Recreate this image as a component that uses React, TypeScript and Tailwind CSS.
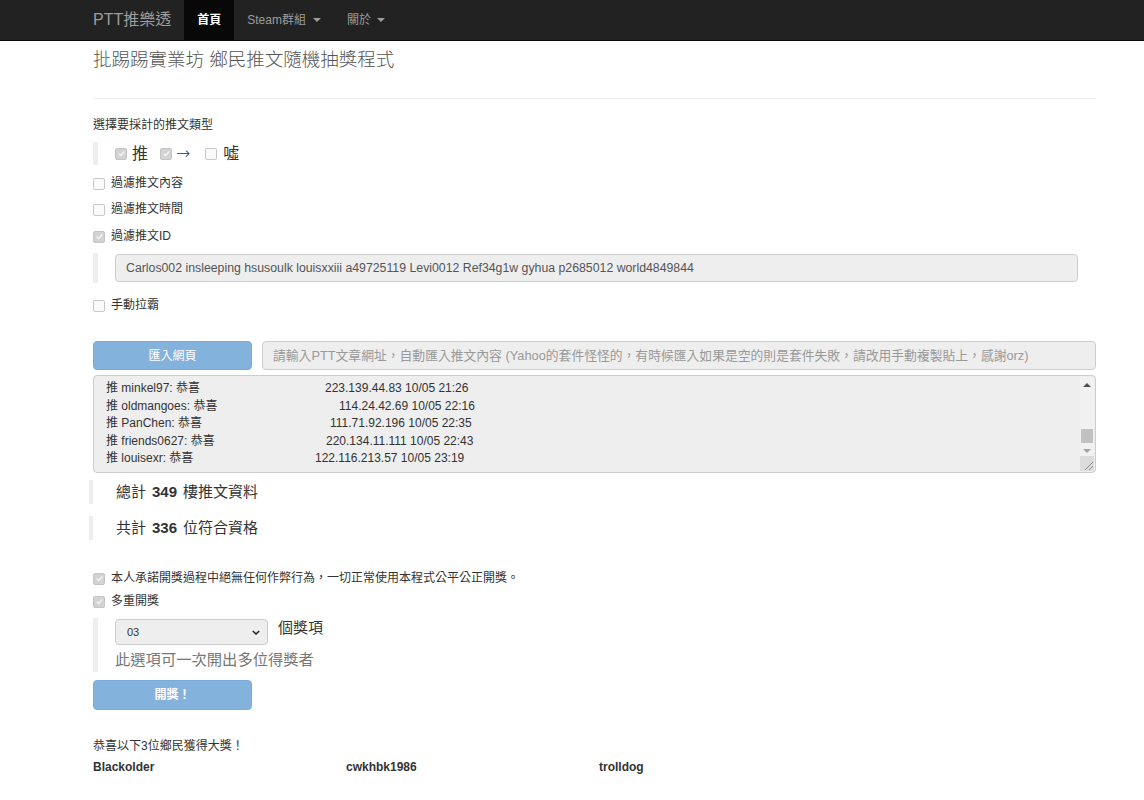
import { useState } from 'react';

const pushes = [
  { name: '推 minkel97: 恭喜', gap: 'w-[219px]', ip: '223.139.44.83 10/05 21:26' },
  { name: '推 oldmangoes: 恭喜', gap: 'w-[233px]', ip: '114.24.42.69 10/05 22:16' },
  { name: '推 PanChen: 恭喜', gap: 'w-[224px]', ip: '111.71.92.196 10/05 22:35' },
  { name: '推 friends0627: 恭喜', gap: 'w-[220px]', ip: '220.134.11.111 10/05 22:43' },
  { name: '推 louisexr: 恭喜', gap: 'w-[209px]', ip: '122.116.213.57 10/05 23:19' },
];

const winners = ['Blackolder', 'cwkhbk1986', 'trolldog'];

function Box({ checked, onClick }: { checked?: boolean; onClick?: () => void }) {
  return (
    <span
      onClick={onClick}
      className={
        checked
          ? 'flex h-[12px] w-[12px] shrink-0 items-center justify-center rounded-[2px] border border-[#c4c4c4] bg-[#d3d3d3]'
          : 'flex h-[12px] w-[12px] shrink-0 items-center justify-center rounded-[2px] border border-[#c8c8c8] bg-[#fafafa]'
      }
    >
      {checked && (
        <svg viewBox="0 0 10 10" className="h-[9px] w-[9px]">
          <path d="M2 5.2 L4.2 7.3 L8 2.8" fill="none" stroke="#f4f4f4" strokeWidth="1.6" />
        </svg>
      )}
    </span>
  );
}

function CheckRow({ label, checked, className }: { label: string; checked?: boolean; className: string }) {
  const [on, setOn] = useState(!!checked);
  return (
    <div className={`flex h-[17px] items-center gap-[6px] ${className}`}>
      <Box checked={on} onClick={() => setOn(!on)} />
      <span className="leading-[17px]">{label}</span>
    </div>
  );
}

function Caret() {
  return <span className="inline-block h-0 w-0 border-x-[4px] border-t-[4px] border-x-transparent border-t-[#9d9d9d]" />;
}

export default function App() {
  return (
    <div className="min-h-screen bg-white text-[12px] text-[#333] font-['Liberation_Sans','Noto_Sans_CJK_TC',sans-serif]">
      {/* Navbar */}
      <nav className="flex h-[41px] items-stretch border-b border-[#080808] bg-[#222] pl-[93px]">
        <div className="mr-[13px] text-[16px] leading-[40px] text-[#9d9d9d]">PTT推樂透</div>
        <div className="bg-[#080808] px-[13px] text-[12px] font-bold leading-[40px] text-white">首頁</div>
        <div className="flex items-center gap-[7px] px-[13px] text-[12px] text-[#9d9d9d]">
          Steam群組 <Caret />
        </div>
        <div className="flex items-center gap-[6px] px-[13px] text-[12px] text-[#9d9d9d]">
          關於 <Caret />
        </div>
      </nav>

      <main className="pl-[93px] pr-[48px]">
        <h1 className="mt-[8px] h-[22px] text-[18.5px] font-light leading-[22px] text-[#555]">
          批踢踢實業坊 鄉民推文隨機抽獎程式
        </h1>
        <hr className="mt-[27px] border-0 border-t border-[#eee]" />

        <div className="mt-[18px] leading-[17px]">選擇要採計的推文類型</div>
        <div className="mt-[8px] flex h-[23px] items-center border-l-[5px] border-[#eee] pl-[17px] text-[16px]">
          <Box checked />
          <span className="ml-[5px]">推</span>
          <span className="ml-[12px]">
            <Box checked />
          </span>
          <span className="ml-[4px] font-['DejaVu_Sans',sans-serif] text-[17px] font-light leading-none">→</span>
          <span className="ml-[15px]">
            <Box />
          </span>
          <span className="ml-[6px]">噓</span>
        </div>

        <CheckRow className="mt-[10px]" label="過濾推文內容" />
        <CheckRow className="mt-[9px]" label="過濾推文時間" />
        <CheckRow className="mt-[10px]" label="過濾推文ID" checked />

        <div className="mt-[8px] border-l-[5px] border-[#eee] py-[1px] pl-[17px] pr-[18px]">
          <div className="flex h-[28px] items-center rounded-[4px] border border-[#ccc] bg-[#eee] px-[10px] text-[12.3px] text-[#555]">
            Carlos002 insleeping hsusoulk louisxxiii a49725119 Levi0012 Ref34g1w gyhua p2685012 world4849844
          </div>
        </div>

        <CheckRow className="mt-[14px]" label="手動拉霸" />

        {/* Import */}
        <div className="mt-[27px] flex h-[29px] gap-[10px]">
          <button className="w-[159px] shrink-0 rounded-[4px] border border-[#7aabd8] bg-[#83b2dd] text-white">
            匯入網頁
          </button>
          <div className="flex flex-1 items-center whitespace-nowrap rounded-[4px] border border-[#ccc] bg-[#eee] px-[10px] text-[12.8px] text-[#999]">
            請輸入PTT文章網址，自動匯入推文內容 (Yahoo的套件怪怪的，有時候匯入如果是空的則是套件失敗，請改用手動複製貼上，感謝orz)
          </div>
        </div>

        {/* Push list */}
        <div className="relative mt-[5px] h-[98px] overflow-hidden rounded-[4px] border border-[#ccc] bg-[#eee] pl-[12px] pt-[4px] leading-[17.5px] text-[#333]">
          {pushes.map((p) => (
            <div key={p.name} className="flex whitespace-nowrap">
              <span className={`${p.gap} shrink-0`}>{p.name}</span>
              <span>{p.ip}</span>
            </div>
          ))}
          <div className="absolute bottom-[1px] right-[1px] top-[1px] w-[14px] bg-[#f1f1f1]">
            <span className="absolute left-[3px] top-[6px] h-0 w-0 border-x-[4px] border-b-[4px] border-x-transparent border-b-[#505050]" />
            <span className="absolute left-[1px] top-[52px] h-[14px] w-[12px] bg-[#c1c1c1]" />
            <span className="absolute left-[3px] top-[72px] h-0 w-0 border-x-[4px] border-t-[4px] border-x-transparent border-t-[#a3a3a3]" />
            <span className="absolute bottom-0 left-0 flex h-[15px] w-[14px] items-end justify-end bg-[#dcdcdc]">
              <svg viewBox="0 0 14 15" className="h-[15px] w-[14px]">
                <path d="M13 6 L5 14 M13 10 L9 14" stroke="#8a8a8a" strokeWidth="1" />
              </svg>
            </span>
          </div>
        </div>

        <div className="-ml-[4px] mt-[7px] flex h-[24px] items-center border-l-[4px] border-[#eee] pl-[23px] text-[15px]">
          <span>總計</span>
          <b className="mx-[6px]">349</b>
          <span>樓推文資料</span>
        </div>
        <div className="-ml-[4px] mt-[12px] flex h-[24px] items-center border-l-[4px] border-[#eee] pl-[23px] text-[15px]">
          <span>共計</span>
          <b className="mx-[6px]">336</b>
          <span>位符合資格</span>
        </div>

        <CheckRow className="mt-[30px]" label="本人承諾開獎過程中絕無任何作弊行為，一切正常使用本程式公平公正開獎。" checked />
        <CheckRow className="mt-[6px]" label="多重開獎" checked />

        <div className="mt-[8px] h-[54px] border-l-[5px] border-[#eee] pl-[17px] pt-[1px]">
          <div className="flex items-start gap-[10px]">
            <div className="flex h-[26px] w-[153px] items-center justify-between rounded-[4px] border border-[#ccc] bg-[#eee] pl-[11px] pr-[7px] text-[11px] text-[#333]">
              <span>03</span>
              <svg viewBox="0 0 10 6" className="h-[5px] w-[8px]">
                <path d="M1 1 L5 5 L9 1" fill="none" stroke="#222" strokeWidth="1.8" />
              </svg>
            </div>
            <span className="text-[15px] leading-[18px]">個獎項</span>
          </div>
          <div className="mt-[5px] text-[15.3px] leading-[20px] text-[#777]">此選項可一次開出多位得獎者</div>
        </div>

        <button className="mt-[8px] h-[30px] w-[159px] rounded-[4px] border border-[#7aabd8] bg-[#83b2dd] font-bold text-white">
          開獎！
        </button>

        <div className="mt-[28px] leading-[17px]">恭喜以下3位鄉民獲得大獎！</div>
        <div className="mt-[4px] grid grid-cols-[253px_253px_253px_1fr] font-bold leading-[17px]">
          {winners.map((w) => (
            <div key={w}>{w}</div>
          ))}
        </div>
      </main>
    </div>
  );
}
